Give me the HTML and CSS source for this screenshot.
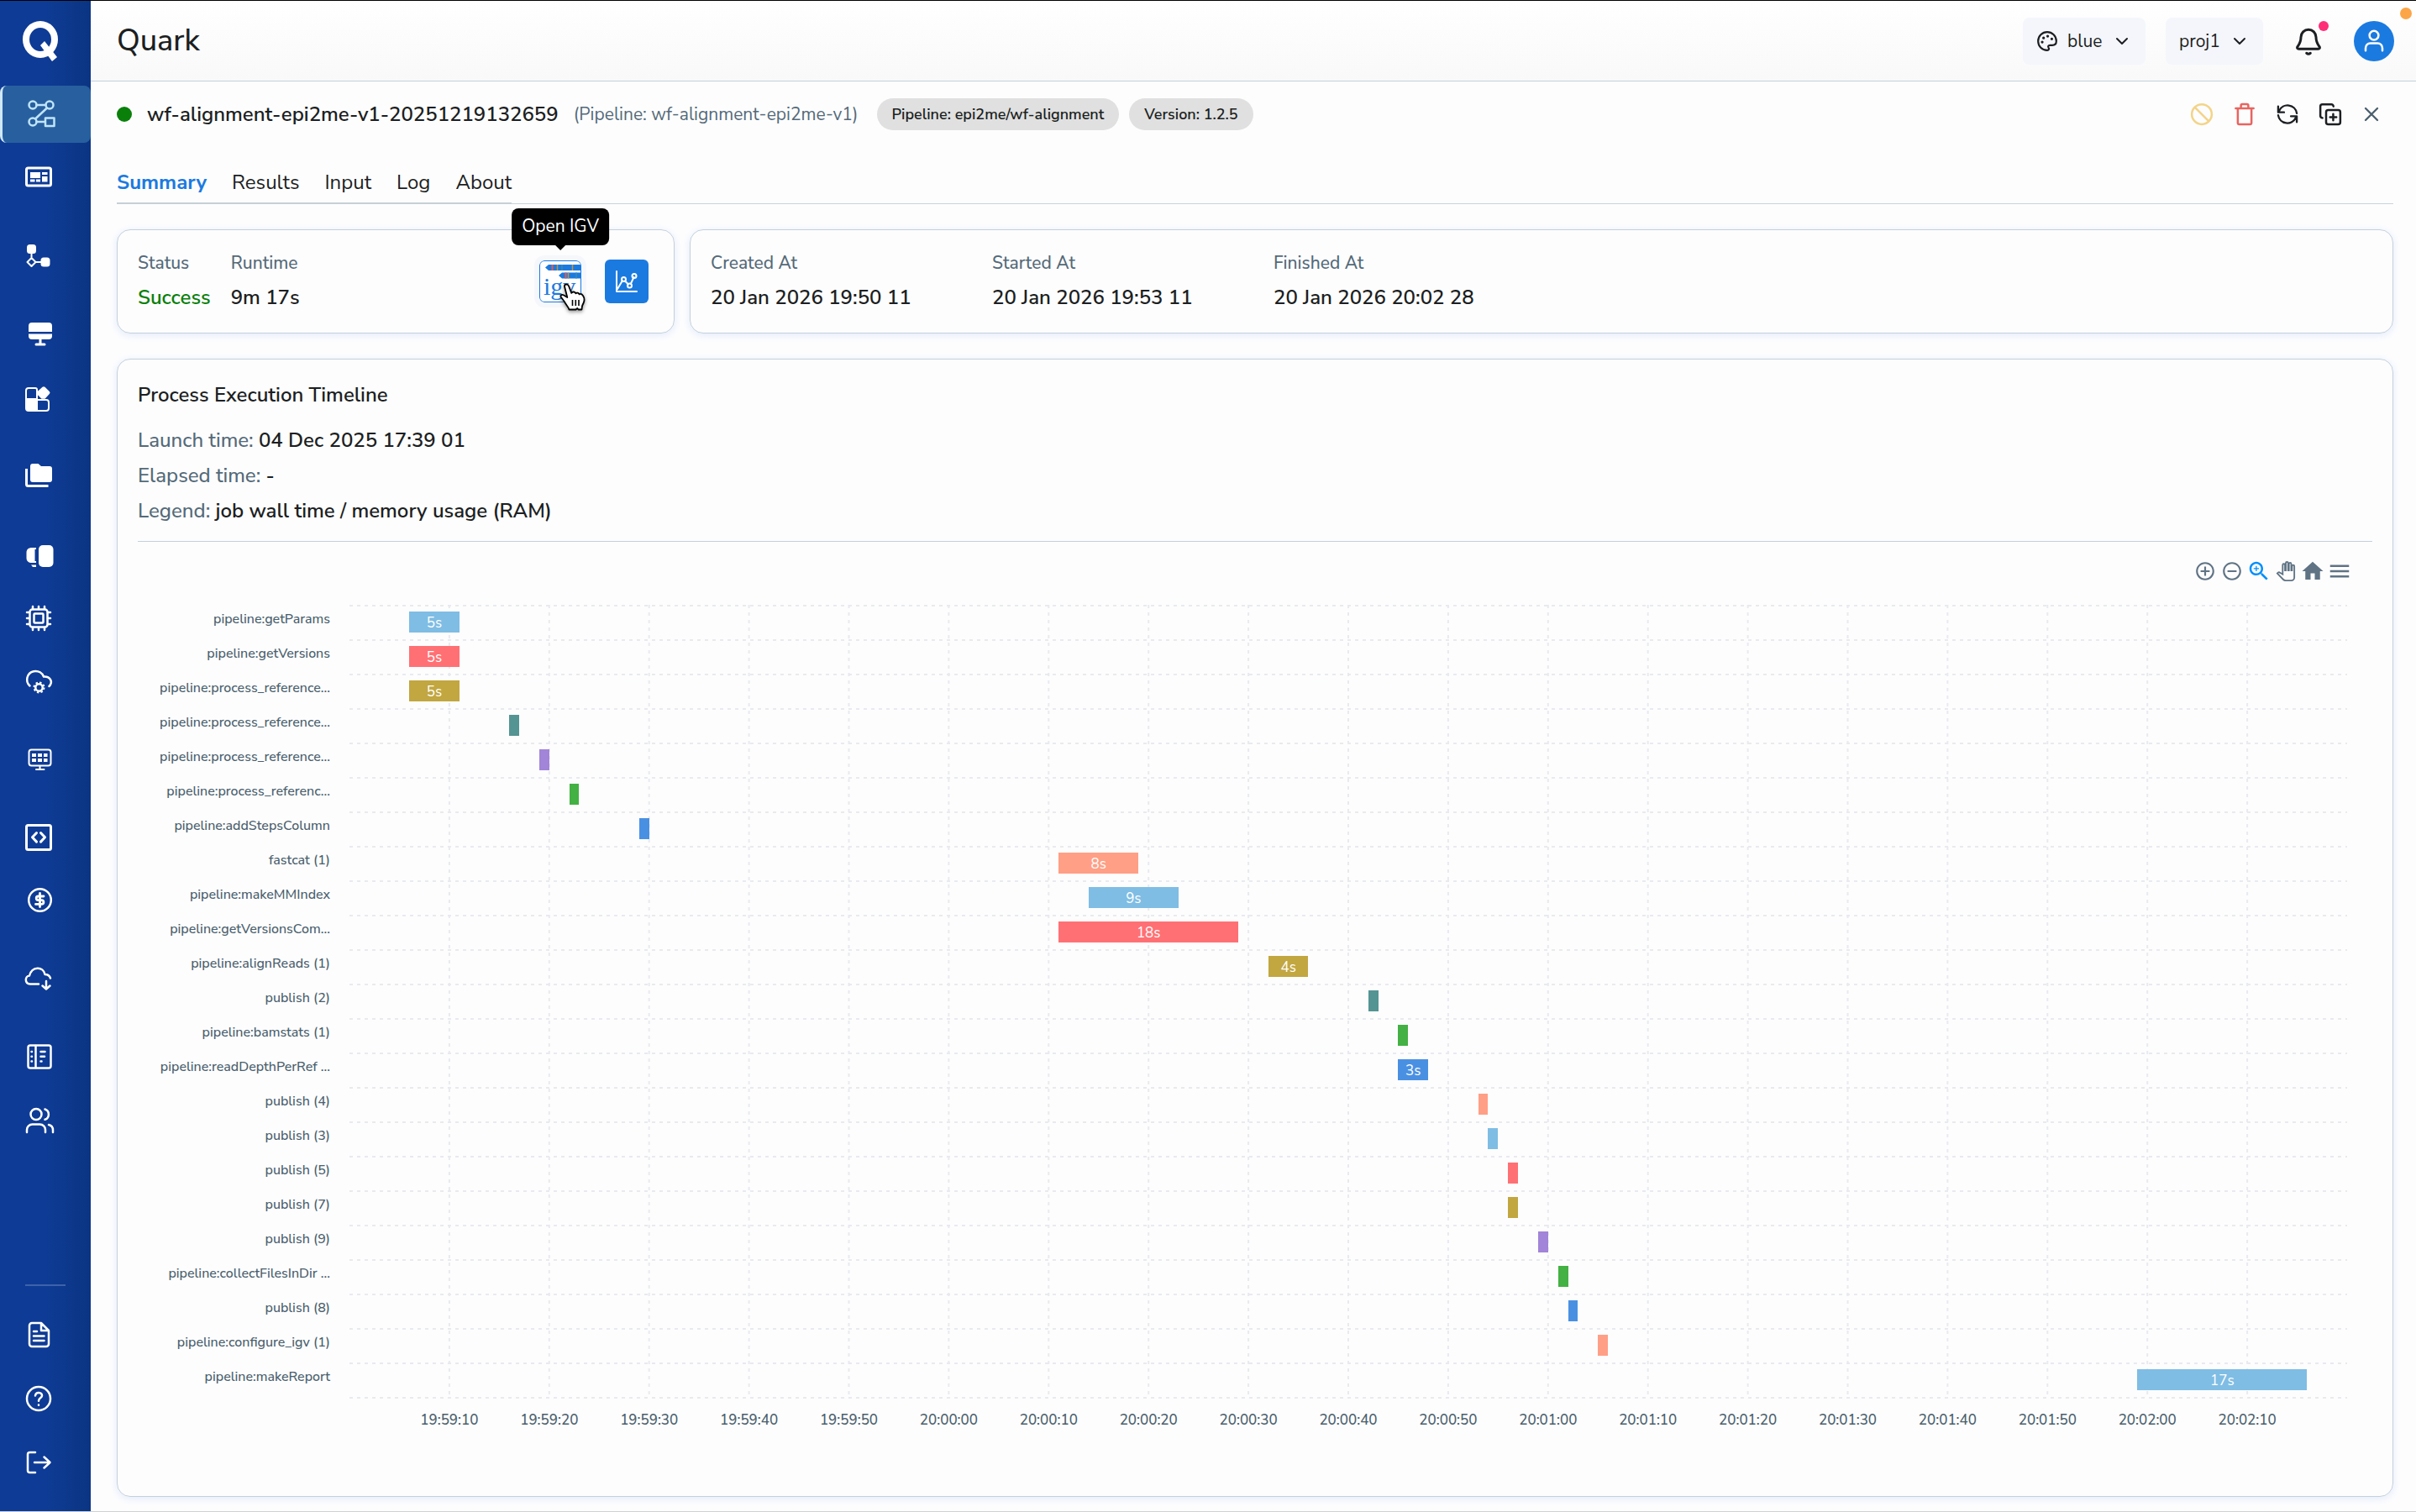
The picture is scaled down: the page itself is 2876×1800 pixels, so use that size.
FILE: index.html
```html
<!DOCTYPE html>
<html lang="en">
<head>
<meta charset="utf-8">
<title>Quark</title>
<link rel="stylesheet" href="styles.css">
</head>
<body>
<div class="app">
  <nav class="sidebar" aria-label="Main">
    <a class="logo" href="#" aria-label="Quark home">
      <svg width="48" height="52" viewBox="0 0 48 52"><ellipse cx="24" cy="22" rx="17" ry="18" fill="none" stroke="#fff" stroke-width="8"/><path d="M24 29l5-5 15 19-6 5z" fill="#fff"/></svg>
    </a>
    <div class="group">
      <a class="item active" href="#" aria-label="Workflows"><svg class="icon" viewBox="0 0 40 40"><circle cx="13" cy="9" r="4.5"/><circle cx="33" cy="9" r="4.5"/><circle cx="13" cy="29" r="4.5"/><path d="M17.5 9h11M30 12.5L16 25.500M17.500 29H28M28 24.500h10.500v9.500H28z"/></svg></a>
      <a class="item" href="#" aria-label="Dashboard"><svg class="icon" viewBox="0 0 40 40"><rect x="5.500" y="8" width="29" height="21" rx="2" stroke-width="3"/><path class="solid" d="M10 13h12v7H10zM10 21.500h5.500v3H10zM17 21.500h5v3h-5zM24 13h6.500v3H24zM24 18h6.500v6.500H24z"/></svg></a>
    </div>
    <div class="group">
      <a class="item" href="#" aria-label="Pipelines"><svg class="icon" viewBox="0 0 40 40"><rect class="solid" x="6" y="6" width="11" height="11" rx="3.500"/><rect class="solid" x="22.500" y="21.500" width="11" height="11" rx="3.500"/><path d="M11.500 16v6M16.500 27h7M11.500 22l5 5-5 5-5-5z" stroke-width="2"/></svg></a>
    </div>
    <div class="group">
      <a class="item" href="#" aria-label="Servers"><svg class="icon" viewBox="0 0 40 40"><path class="solid" d="M8 17v-7a4 4 0 0 1 4-4h20a4 4 0 0 1 4 4v7zM8 19.500h28V22a4 4 0 0 1-4 4H12a4 4 0 0 1-4-4z"/><path d="M22 25v6M17 32h10" stroke-width="3"/></svg></a>
      <a class="item" href="#" aria-label="Widgets"><svg class="icon" viewBox="0 0 40 40"><path d="M5 20V11a3 3 0 0 1 3-3h8a2 2 0 0 1 2 2v10M18 22h11a3 3 0 0 1 3 3v7a3 3 0 0 1-3 3H18" stroke-width="2"/><path class="solid" d="M4 20h15v16H8a4 4 0 0 1-4-4zM24.500 6.800q1.500-1.300 3 0l5.300 5.200q1.500 1.500 0 3l-5.300 5.800h-4l-4.800-4.800q-1.700-2.500 0-4z"/></svg></a>
    </div>
    <div class="group">
      <a class="item" href="#" aria-label="Files"><svg class="icon" viewBox="0 0 40 40"><path d="M5.500 11v18.500a2 2 0 0 0 2 2h24" stroke-width="3" stroke-linecap="butt"/><path class="solid" d="M10 8a3 3 0 0 1 3-3h6.500l3.500 3h10a3 3 0 0 1 3 3v13a3 3 0 0 1-3 3H13a3 3 0 0 1-3-3z"/></svg></a>
    </div>
    <div class="group">
      <a class="item" href="#" aria-label="Compare"><svg class="icon" viewBox="0 0 40 40"><rect class="solid" x="20" y="9" width="17.500" height="26" rx="5"/><path class="solid" d="M12 12h5v2h-1.500v14H17v2h-5c-4 0-6.500-2-6.500-6v-6c0-4 2.500-6 6.500-6zM11 32.500h6V35h-4z"/></svg></a>
      <a class="item" href="#" aria-label="Compute"><svg class="icon" viewBox="0 0 40 40"><rect x="9.500" y="9.500" width="21" height="21" rx="3"/><rect x="14.500" y="14.500" width="11" height="11" rx="1"/><path d="M13 9V6M20 9V6M27 9V6M13 34v-3M20 34v-3M27 34v-3M9 13H6M9 20H6M9 27H6M34 13h-3M34 20h-3M34 27h-3"/></svg></a>
      <a class="item" href="#" aria-label="Cloud settings"><svg class="icon" viewBox="0 0 40 40"><path d="M9.500 24.500C3.500 19 6 9 14 7.200c6-1.200 10.500 2 12 6.300 8-.500 11.500 6.500 6.500 11.500"/><circle cx="20.500" cy="26.500" r="4.200"/><circle cx="20.500" cy="26.500" r="6" stroke-width="2" stroke-dasharray="2.400 2.300" stroke-linecap="butt"/></svg></a>
    </div>
    <div class="group">
      <a class="item" href="#" aria-label="Monitoring"><svg class="icon" viewBox="0 0 40 40"><rect x="8.500" y="7.500" width="26" height="19" rx="3" stroke-width="2"/><path class="solid" d="M12 12h5v4h-5zM19 12h5v4h-5zM26 12h4.500v4H26zM12 18h5v4h-5zM19 18h5v4h-5zM26 18h4.500v4H26z"/><path d="M21.500 27v3M17 31h9.500" stroke-width="2"/></svg></a>
    </div>
    <div class="group">
      <a class="item" href="#" aria-label="Code"><svg class="icon" viewBox="0 0 40 40"><rect x="5.500" y="4.500" width="29" height="29" rx="2" stroke-width="3"/><path d="M17.500 13.500l-5 5.300 5 5.300M22.500 13.500l5 5.300-5 5.300" stroke-width="3"/></svg></a>
      <a class="item" href="#" aria-label="Billing"><svg class="icon" viewBox="0 0 40 40"><circle cx="21.500" cy="17.500" r="13.300"/><path d="M26 13h-6.500a2.300 2.300 0 0 0 0 4.600h4a2.300 2.300 0 0 1 0 4.800H16.500M21.500 9.500v16" stroke-width="2.800"/></svg></a>
    </div>
    <div class="group">
      <a class="item" href="#" aria-label="Downloads"><svg class="icon" viewBox="0 0 40 40"><path d="M20 24.500H10c-7-.500-6.500-9.500-1-10C12 3 25.500 3 27.500 13c3 0 5.500 1.500 6.500 4.500M29 21v9M24.500 26.500L29 30.500l4.500-4"/></svg></a>
    </div>
    <div class="group">
      <a class="item" href="#" aria-label="Catalog"><svg class="icon" viewBox="0 0 40 40"><rect x="7.500" y="4.500" width="27" height="27" rx="2.500"/><path d="M16.500 5v26M22.500 12h5M22.500 17.800h4.500M22.500 23.500h1M11.500 12h.500M11.500 17.800h.500M11.500 23.500h.500"/></svg></a>
      <a class="item" href="#" aria-label="Users"><svg class="icon" viewBox="0 0 40 40"><circle cx="17" cy="10.500" r="6.500"/><path d="M6 32v-3a6.500 6.500 0 0 1 6.500-6.500h9A6.500 6.500 0 0 1 28 29v3M27.500 4.500a6.500 6.500 0 0 1 0 12.300M32 23a6.500 6.500 0 0 1 5 6.300V32"/></svg></a>
    </div>
    <div class="group foot">
      <a class="item" href="#" aria-label="Documents"><svg class="icon" viewBox="0 0 40 40"><path d="M23 6H12a3 3 0 0 0-3 3v22a3 3 0 0 0 3 3h17a3 3 0 0 0 3-3V15zM23 6v9h9M14 16h4M14 21.500h12.500M14 27h12.500"/></svg></a>
      <a class="item" href="#" aria-label="Help"><svg class="icon" viewBox="0 0 40 40"><circle cx="20" cy="20" r="14"/><path d="M16 16.500c.500-5 8.500-4.500 8 .200-.300 3-4 2.300-4 6M20 27.500v.200"/></svg></a>
      <a class="item" href="#" aria-label="Log out"><svg class="icon" viewBox="0 0 40 40"><path d="M16 8H9.500A2.500 2.500 0 0 0 7 10.500v19A2.500 2.500 0 0 0 9.500 32H16M15 20h18M26.500 13.500L33.500 20l-7 6.500"/></svg></a>
    </div>
  </nav>

  <div class="page">
    <header class="topbar">
      <h1>Quark</h1>
      <div class="tools">
        <label class="picker">
          <svg class="line" width="26" height="26" viewBox="0 0 24 24"><path d="M12 22a10 10 0 1 1 10-10c0 3-2 4.500-4.500 4.500H15c-1.800 0-2.500 1.500-1.500 2.800 1 1.200.3 2.700-1.500 2.700z"/><path d="M6.500 13v.01M8 8.500v.01M12.500 6.500v.01M17 9.500v.01" stroke-width="3"/></svg>
          <select aria-label="Theme"><option>blue</option></select>
          <svg class="line" width="24" height="24" viewBox="0 0 24 24"><path d="M6 9l6 6 6-6"/></svg>
        </label>
        <label class="picker">
          <select aria-label="Project"><option>proj1</option></select>
          <svg class="line" width="24" height="24" viewBox="0 0 24 24"><path d="M6 9l6 6 6-6"/></svg>
        </label>
        <button class="bell" aria-label="Notifications">
          <svg class="line" width="36" height="36" viewBox="0 0 24 24"><path d="M12 2.800a6 6 0 0 0-6 6c0 4-1.200 5.500-2.600 7.400-.700 1-.200 2 .900 2h15.400c1.100 0 1.600-1 .900-2C19.200 14.300 18 12.800 18 8.800a6 6 0 0 0-6-6zM10.500 21.500q1.500 1.300 3 0"/></svg>
          <span class="badge"></span>
        </button>
        <button class="avatar" aria-label="Account">
          <svg class="line" width="30" height="30" viewBox="0 0 24 24"><circle cx="12" cy="6.500" r="4.300"/><path d="M4 21v-2.500a4.500 4.500 0 0 1 4.500-4.500h7a4.500 4.500 0 0 1 4.500 4.500V21"/></svg>
        </button>
      </div>
      <span class="presence"></span>
    </header>

    <main class="content">
      <div class="run">
        <span class="dot"></span>
        <h2>wf-alignment-epi2me-v1-20251219132659</h2>
        <span class="origin">(Pipeline: wf-alignment-epi2me-v1)</span>
        <span class="chips"><span class="chip">Pipeline: epi2me/wf-alignment</span><span class="chip">Version: 1.2.5</span></span>
        <div class="actions">
          <button class="stop" aria-label="Cancel"><svg class="line" width="30" height="30" viewBox="0 0 24 24"><circle cx="12" cy="12" r="9.500"/><path d="M5.500 5.500l13 13"/></svg></button>
          <button class="trash" aria-label="Delete"><svg class="line" width="30" height="30" viewBox="0 0 24 24"><path d="M3.500 6.300h17M8.500 6V3.700c0-.800.500-1.300 1.300-1.300h4.400c.800 0 1.300.5 1.300 1.300V6M5.500 6.500v13.700c0 .9.500 1.400 1.400 1.400h10.200c.9 0 1.400-.5 1.400-1.400V6.500"/></svg></button>
          <button aria-label="Refresh"><svg class="line" width="28" height="28" viewBox="0 0 24 24"><path d="M2.500 4v6h6M21.500 20v-6h-6M3.500 8.500A9.500 9.500 0 0 1 21.500 11M20.500 15.500A9.500 9.500 0 0 1 2.500 13"/></svg></button>
          <button aria-label="Duplicate"><svg class="line" width="30" height="30" viewBox="0 0 24 24"><rect x="8" y="8" width="13.500" height="13.500" rx="2"/><path d="M14.750 11.800v6M11.750 14.750h6M4.500 15.500c-1.200-.3-2-1-2-2V4.500c0-1.200.800-2 2-2H13c1 0 1.800.700 2 2"/></svg></button>
          <button class="close" aria-label="Close"><svg class="line" width="28" height="28" viewBox="0 0 24 24"><path d="M6 6l12 12M18 6L6 18"/></svg></button>
        </div>
      </div>

      <nav class="tabs" aria-label="Run sections">
        <div class="tablist"><a class="current" href="#">Summary</a><a href="#">Results</a><a href="#">Input</a><a href="#">Log</a><a href="#">About</a></div>
      </nav>

      <div class="cards">
        <section class="card status">
          <dl><dt>Status</dt><dd class="ok">Success</dd></dl>
          <dl><dt>Runtime</dt><dd>9m 17s</dd></dl>
          <div class="links">
            <div class="igv-wrap">
              <button class="igv" aria-label="Open IGV" aria-describedby="tip">
                <svg width="48" height="48" viewBox="0 0 48 48"><path d="M6 7.500L10 4h38v7H10zM22 17l4-3.500h22v7H26z" fill="#1b7ae0"/><path d="M14.500 4v7M30.500 13.500v7" stroke="#e8594f" stroke-width="2"/><path d="M20.500 4v7M38.500 4v7M33.500 13.500v7" stroke="#c09545" stroke-width="1.500"/><path d="M26 4v7M43 13.500v7" stroke="#3b8ca8" stroke-width="1.500"/><text class="igv-name" x="4" y="40">igv</text></svg>
              </button>
              <span class="tooltip" id="tip" role="tooltip">Open IGV</span>
              <svg class="cursor" width="34" height="36" viewBox="0 0 34 36"><path d="M6 4C5.700 1.200 9.800.600 11 3.500l3.300 8.300c1.200-2 4.200-1.600 5 .500 1.300-1.300 3.600-.800 4.300 1 1.600-.8 3.400.2 4.400 1.700 1.600 2.300 2 4 1.200 7-.7 2.500-2 4-2.300 6l-.4 3.500h-4l-1.200-1.500-1.800 1.500H11.500c-.8-3-2.800-4.500-4.500-7.500-1.500-3-3-4.500-5-7-1.500-2.200.8-4 2.800-2.700L9.300 17z" fill="#fff" stroke="#000" stroke-width="1.800" stroke-linejoin="round"/><path d="M15.500 20v7M19.300 20v7M23 20v7" stroke="#000" stroke-width="1.600"/></svg>
            </div>
            <button class="metrics" aria-label="Open metrics">
              <svg class="line" width="30" height="30" viewBox="0 0 30 30"><path d="M3 3v24h24M4 24l6-10M13 14.500l4 4M20 17.500l3.500-7.500"/><circle cx="11.500" cy="12.500" r="2.500"/><circle cx="18.500" cy="20" r="2.500"/><circle cx="24" cy="8.500" r="2.500"/></svg>
            </button>
          </div>
        </section>
        <section class="card dates">
          <dl><dt>Created At</dt><dd>20 Jan 2026 19:50 11</dd></dl>
          <dl><dt>Started At</dt><dd>20 Jan 2026 19:53 11</dd></dl>
          <dl><dt>Finished At</dt><dd>20 Jan 2026 20:02 28</dd></dl>
        </section>
      </div>

      <section class="card timeline">
        <h3>Process Execution Timeline</h3>
        <ul class="facts">
          <li>Launch time: <b>04 Dec 2025 17:39 01</b></li>
          <li>Elapsed time: <b>-</b></li>
          <li>Legend: <b>job wall time / memory usage (RAM)</b></li>
        </ul>
        <div class="toolbar">
          <button aria-label="Zoom in"><svg width="26" height="26" viewBox="0 0 24 24"><path d="M13 7h-2v4H7v2h4v4h2v-4h4v-2h-4V7zm-1-5C6.480 2 2 6.480 2 12s4.480 10 10 10 10-4.480 10-10S17.520 2 12 2zm0 18c-4.410 0-8-3.590-8-8s3.590-8 8-8 8 3.590 8 8-3.590 8-8 8z"/></svg></button>
          <button aria-label="Zoom out"><svg width="26" height="26" viewBox="0 0 24 24"><path d="M7 11v2h10v-2H7zm5-9C6.480 2 2 6.480 2 12s4.480 10 10 10 10-4.480 10-10S17.520 2 12 2zm0 18c-4.410 0-8-3.590-8-8s3.590-8 8-8 8 3.590 8 8-3.590 8-8 8z"/></svg></button>
          <button class="on" aria-label="Selection zoom"><svg width="30" height="30" viewBox="0 0 24 24"><path d="M15.500 14h-.790l-.280-.270C15.410 12.590 16 11.110 16 9.500 16 5.910 13.090 3 9.500 3S3 5.910 3 9.500 5.910 16 9.500 16c1.610 0 3.090-.590 4.230-1.570l.270.280v.790l5 4.990L20.490 19l-4.990-5zm-6 0C7.010 14 5 11.990 5 9.500S7.010 5 9.500 5 14 7.010 14 9.500 11.990 14 9.500 14z"/><path d="M12 10h-2v2H9v-2H7V9h2V7h1v2h2v1z"/></svg></button>
          <button aria-label="Panning"><svg class="pan" width="24" height="24" viewBox="-1 -1 26 26"><path d="M23 5.500V20c0 2.200-1.800 4-4 4h-7.300c-1.080 0-2.100-.430-2.850-1.190L1 14.830s1.260-1.230 1.300-1.250c.220-.190.490-.290.790-.290.220 0 .420.060.600.160.040.010 4.310 2.460 4.310 2.460V4c0-.830.670-1.500 1.500-1.500S11 3.170 11 4v7h1V1.500c0-.830.670-1.500 1.500-1.500S15 .670 15 1.500V11h1V2.500c0-.830.670-1.500 1.500-1.500s1.500.670 1.500 1.500V11h1V5.500c0-.830.670-1.500 1.500-1.500s1.500.670 1.500 1.500z"/></svg></button>
          <button aria-label="Reset zoom"><svg width="30" height="30" viewBox="0 0 24 24"><path d="M10 20v-6h4v6h5v-8h3L12 3 2 12h3v8z"/></svg></button>
          <button aria-label="Menu"><svg width="30" height="30" viewBox="0 0 24 24"><path d="M3 18h18v-2H3v2zm0-5h18v-2H3v2zm0-7v2h18V6H3z"/></svg></button>
        </div>
        <div class="chart">
          <ol class="names">
            <li>pipeline:getParams</li><li>pipeline:getVersions</li><li>pipeline:process_reference...</li><li>pipeline:process_reference...</li><li>pipeline:process_reference...</li><li>pipeline:process_referenc...</li><li>pipeline:addStepsColumn</li><li>fastcat (1)</li><li>pipeline:makeMMIndex</li><li>pipeline:getVersionsCom...</li><li>pipeline:alignReads (1)</li><li>publish (2)</li><li>pipeline:bamstats (1)</li><li>pipeline:readDepthPerRef ...</li><li>publish (4)</li><li>publish (3)</li><li>publish (5)</li><li>publish (7)</li><li>publish (9)</li><li>pipeline:collectFilesInDir ...</li><li>publish (8)</li><li>pipeline:configure_igv (1)</li><li>pipeline:makeReport</li>
          </ol>
          <div class="plot">
            <svg class="ticks" width="100%" height="100%"><line x1="5%" x2="5%" y2="100%"/><line x1="10%" x2="10%" y2="100%"/><line x1="15%" x2="15%" y2="100%"/><line x1="20%" x2="20%" y2="100%"/><line x1="25%" x2="25%" y2="100%"/><line x1="30%" x2="30%" y2="100%"/><line x1="35%" x2="35%" y2="100%"/><line x1="40%" x2="40%" y2="100%"/><line x1="45%" x2="45%" y2="100%"/><line x1="50%" x2="50%" y2="100%"/><line x1="55%" x2="55%" y2="100%"/><line x1="60%" x2="60%" y2="100%"/><line x1="65%" x2="65%" y2="100%"/><line x1="70%" x2="70%" y2="100%"/><line x1="75%" x2="75%" y2="100%"/><line x1="80%" x2="80%" y2="100%"/><line x1="85%" x2="85%" y2="100%"/><line x1="90%" x2="90%" y2="100%"/><line x1="95%" x2="95%" y2="100%"/></svg>
            <div class="track"><span class="bar sky" style="--start:6;--secs:5">5s</span></div>
            <div class="track"><span class="bar red" style="--start:6;--secs:5">5s</span></div>
            <div class="track"><span class="bar olive" style="--start:6;--secs:5">5s</span></div>
            <div class="track"><span class="bar teal" style="--start:16;--secs:1"></span></div>
            <div class="track"><span class="bar purple" style="--start:19;--secs:1"></span></div>
            <div class="track"><span class="bar green" style="--start:22;--secs:1"></span></div>
            <div class="track"><span class="bar blue" style="--start:29;--secs:1"></span></div>
            <div class="track"><span class="bar salmon" style="--start:71;--secs:8">8s</span></div>
            <div class="track"><span class="bar sky" style="--start:74;--secs:9">9s</span></div>
            <div class="track"><span class="bar red" style="--start:71;--secs:18">18s</span></div>
            <div class="track"><span class="bar olive" style="--start:92;--secs:4">4s</span></div>
            <div class="track"><span class="bar teal" style="--start:102;--secs:1"></span></div>
            <div class="track"><span class="bar green" style="--start:105;--secs:1"></span></div>
            <div class="track"><span class="bar blue" style="--start:105;--secs:3">3s</span></div>
            <div class="track"><span class="bar salmon" style="--start:113;--secs:1"></span></div>
            <div class="track"><span class="bar sky" style="--start:114;--secs:1"></span></div>
            <div class="track"><span class="bar red" style="--start:116;--secs:1"></span></div>
            <div class="track"><span class="bar olive" style="--start:116;--secs:1"></span></div>
            <div class="track"><span class="bar purple" style="--start:119;--secs:1"></span></div>
            <div class="track"><span class="bar green" style="--start:121;--secs:1"></span></div>
            <div class="track"><span class="bar blue" style="--start:122;--secs:1"></span></div>
            <div class="track"><span class="bar salmon" style="--start:125;--secs:1"></span></div>
            <div class="track"><span class="bar sky" style="--start:179;--secs:17">17s</span></div>
          </div>
          <ol class="axis">
            <li>19:59:10</li><li>19:59:20</li><li>19:59:30</li><li>19:59:40</li><li>19:59:50</li><li>20:00:00</li><li>20:00:10</li><li>20:00:20</li><li>20:00:30</li><li>20:00:40</li><li>20:00:50</li><li>20:01:00</li><li>20:01:10</li><li>20:01:20</li><li>20:01:30</li><li>20:01:40</li><li>20:01:50</li><li>20:02:00</li><li>20:02:10</li>
          </ol>
        </div>
      </section>
    </main>
  </div>
</div>
</body>
</html>
```
FILE: styles.css
```css
* { box-sizing: border-box; }

body {
  margin: 0;
  background: #fdfdfe;
  color: #1c1f22;
  font-family: "Nunito Sans", Nunito, "Open Sans", "Noto Sans", sans-serif;
  font-size: 24px;
  line-height: 32px;
}

h1, h2, h3, dl, dd, ul, ol { margin: 0; padding: 0; font-weight: 500; }
ul, ol { list-style: none; }
a { color: inherit; text-decoration: none; }
svg { display: block; flex: none; }
b { color: #1c1f22; font-weight: 600; }

button {
  display: flex;
  align-items: center;
  justify-content: center;
  padding: 0;
  border: 0;
  background: none;
  color: inherit;
  font: inherit;
}

.line {
  fill: none;
  stroke: currentColor;
  stroke-width: 2;
  stroke-linecap: round;
  stroke-linejoin: round;
}

.app {
  display: flex;
  min-height: 100vh;
  border-top: 1px solid #000;
  border-bottom: 1px solid #cfd0d2;
}

/* Sidebar */
.sidebar {
  display: flex;
  flex: none;
  flex-direction: column;
  gap: 17px;
  width: 108px;
  padding-bottom: 20px;
  background: linear-gradient(90deg, #0e3b95 50%, #0b3583);
  color: #fff;
}

.logo { height: 80px; padding: 24px 0 0 24px; }
.group { display: flex; flex-direction: column; gap: 8px; padding: 4px 0; }
.item { display: flex; align-items: center; height: 68px; padding-left: 26px; }

.item.active {
  padding-left: 23px;
  border-left: 3px solid #cfe8fb;
  border-radius: 8px;
  background: #28609f;
  color: #c0e4fb;
}

.icon {
  width: 40px;
  height: 40px;
  fill: none;
  stroke: currentColor;
  stroke-width: 2.5;
  stroke-linecap: round;
  stroke-linejoin: round;
}

.solid { fill: currentColor; stroke: none; }
.foot { margin-top: auto; }

.foot::before {
  content: "";
  width: 48px;
  height: 2px;
  margin: 0 0 16px 30px;
  background: #3e62aa;
}

/* Top bar */
.page { display: flex; flex: 1; flex-direction: column; min-width: 0; }

.topbar {
  position: relative;
  display: flex;
  align-items: center;
  justify-content: space-between;
  height: 96px;
  padding: 0 26px 0 31px;
  border-bottom: 1px solid #c3d0dc;
  background: linear-gradient(#fff, #f9f9fa);
}

.topbar h1 { font-size: 36px; line-height: 48px; }
.tools { display: flex; align-items: center; gap: 24px; }

.picker {
  display: flex;
  align-items: center;
  gap: 11px;
  height: 56px;
  padding: 0 16px;
  border-radius: 8px;
  background: #f4f6fb;
}

.picker select {
  appearance: none;
  padding: 0;
  border: 0;
  background: none;
  color: inherit;
  font: inherit;
  font-size: 21px;
}

.bell { position: relative; margin: 0 12px; }

.badge, .presence { position: absolute; border-radius: 50%; }
.badge { top: -6px; right: -6px; width: 12px; height: 12px; background: #ff2d78; }
.presence { top: 8px; right: 5px; width: 14px; height: 14px; background: #fca548; }
.avatar { width: 48px; height: 48px; border-radius: 50%; background: #1b7ae0; color: #fff; }

/* Run heading */
.content { display: flex; flex: 1; flex-direction: column; padding: 20px 27px 17px 31px; }
.run { display: flex; align-items: center; gap: 18px; height: 38px; }
.run h2 { font-size: 24px; font-weight: 600; }
.dot { width: 18px; height: 18px; border-radius: 50%; background: #0a800a; }
.origin { color: #546a78; font-size: 21px; }
.chips { display: flex; gap: 12px; margin-left: 4px; }

.chip {
  height: 38px;
  padding: 0 18px;
  border-radius: 19px;
  background: #e0e0e0;
  font-size: 18px;
  font-weight: 600;
  line-height: 38px;
}

.actions { display: flex; gap: 21px; margin: 0 13px 0 auto; }
.actions button { width: 30px; height: 30px; }
.actions .close { width: 26px; color: #4b5f6e; }
.stop { color: #f3d488; }
.trash { color: #e8645f; }

.tabs { margin-top: 46px; border-bottom: 1px solid #c5d3dd; }

.tablist {
  display: inline-flex;
  gap: 30px;
  height: 42px;
  margin-bottom: -1px;
  vertical-align: top;
  border-bottom: 2px solid #c5d0d6;
}

.tabs .current { color: #1b7ae0; font-weight: 700; }

/* Cards */
.card {
  border: 1px solid #c3d0dc;
  border-radius: 16px;
  box-shadow: 0 2px 10px #e2eafa;
}

.cards { display: grid; grid-template-columns: 664px 1fr; gap: 18px; margin: 30px 0; }
.cards .card { display: flex; min-height: 124px; padding: 23px 24px; }
dt { color: #546a78; font-size: 21px; }
dd { margin-top: 9px; font-weight: 600; }
.ok { color: #0a800a; }
.status { gap: 24px; }
.dates dl { width: 335px; }
.links { display: flex; gap: 28px; align-items: center; margin: 0 6px 0 auto; }
.igv-wrap { position: relative; }

.igv {
  width: 50px;
  height: 50px;
  overflow: hidden;
  border: 1px solid #1b7ae0;
  border-radius: 6px;
  outline: 6px solid #f5f7fb;
  background: #fff;
}

.igv-name { fill: #1b7ae0; font: 30px "Liberation Serif", serif; }
.metrics { width: 52px; height: 52px; border-radius: 6px; background: #1b7ae0; color: #fff; }

.tooltip {
  position: absolute;
  bottom: 68px;
  left: 50%;
  height: 44px;
  padding: 0 12px;
  border-radius: 8px;
  background: #000;
  color: #fff;
  font-size: 21px;
  line-height: 42px;
  white-space: nowrap;
  transform: translateX(-50%);
}

.tooltip::after {
  content: "";
  position: absolute;
  top: 100%;
  left: 50%;
  margin-left: -6px;
  border: 6px solid transparent;
  border-top-color: #000;
}

.cursor { position: absolute; top: 27px; left: 24px; filter: drop-shadow(0 2px 2px #0006); }

/* Timeline */
.timeline { flex: 1; padding: 26px 24px 40px; }
.timeline h3 { font-size: 24px; font-weight: 600; }
.facts { margin-top: 17px; padding-bottom: 15px; border-bottom: 1px solid #c3d0dc; color: #546a78; line-height: 42px; }
.toolbar { display: flex; justify-content: flex-end; margin: 19px 23px 0 0; }
.toolbar button { width: 32px; height: 32px; }
.toolbar svg { fill: #5f7384; }
.toolbar .on svg { fill: #008ffb; }
.toolbar .pan { fill: none; stroke: #5f7384; stroke-width: 2; }

.chart {
  display: grid;
  grid-template-columns: 229px 1fr;
  column-gap: 23px;
  margin: 24px 30px 0 0;
  color: #4a606c;
  font-size: 17px;
}

.names { font-size: 16px; text-align: right; }
.names li { height: 41px; line-height: 34px; white-space: nowrap; }
.plot { position: relative; padding-bottom: 2px; background: repeating-linear-gradient(90deg, #e9eaee 0 4px, transparent 4px 9px) bottom / 100% 2px no-repeat; }
.ticks { position: absolute; inset: 0; z-index: -1; stroke: #e9eaee; stroke-width: 2; stroke-dasharray: 4 5; }

.track {
  height: 41px;
  padding-top: 8px;
  background: repeating-linear-gradient(90deg, #e9eaee 0 4px, transparent 4px 9px) top / 100% 2px no-repeat;
}

.bar {
  display: block;
  width: calc(var(--secs) * 0.5%);
  height: 25px;
  margin-left: calc(var(--start) * 0.5%);
  color: #fff;
  line-height: 27px;
  text-align: center;
}

.sky { background: #7fbde4; }
.red { background: #ff7074; }
.olive { background: #c2a640; }
.teal { background: #549492; }
.purple { background: #a284d8; }
.green { background: #43b143; }
.blue { background: #4a90e2; }
.salmon { background: #ff9f86; }

.axis {
  display: grid;
  grid-column: 2;
  grid-template-columns: repeat(19, 1fr);
  margin-top: 10px;
  padding: 0 2.5%;
  text-align: center;
}
```
